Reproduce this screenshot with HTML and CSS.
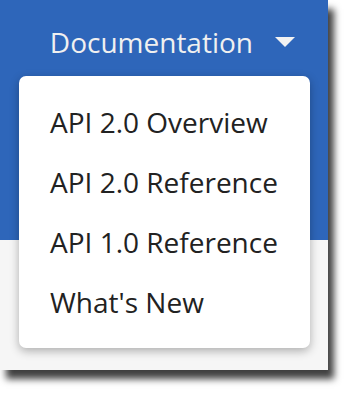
FILE: index.html
```html
<!DOCTYPE html>
<html>
<head>
<meta charset="utf-8">
<link rel="stylesheet" href="styles.css">
</head>
<body>
<div class="frame">
  <header class="header">
    <div class="nav">
      <span class="nav-label">Documentation</span>
      <svg class="caret" width="20" height="10" viewBox="0 0 20 10"><path d="M0 0 H20 L10 10 Z" fill="#f2f2f2"/></svg>
    </div>
  </header>
  <div class="below"></div>
  <ul class="menu">
    <li class="item">API 2.0 Overview</li>
    <li class="item">API 2.0 Reference</li>
    <li class="item">API 1.0 Reference</li>
    <li class="item">What's New</li>
  </ul>
</div>
</body>
</html>
```

FILE: styles.css
```css
html, body {
  margin: 0;
  padding: 0;
  background: #ffffff;
}
body {
  font-family: "Open Sans", "Noto Sans", sans-serif;
  height: 395px;
}
.frame {
  position: relative;
  width: 328px;
  height: 370px;
  display: flex;
  flex-direction: column;
  box-shadow: 6px 9px 7px rgba(0, 0, 0, 0.75);
}
.header {
  height: 240px;
  background: #2e66ba;
  display: flex;
  justify-content: flex-end;
  align-items: flex-start;
}
.nav {
  display: flex;
  align-items: center;
  gap: 22px;
  padding: 22px 33px 0 0;
}
.nav-label {
  font-size: 28px;
  line-height: 40px;
  color: #f0f0f0;
}
.caret {
  display: block;
}
.below {
  flex: 1;
  background: #f6f6f6;
}
.menu {
  position: absolute;
  left: 19px;
  top: 76px;
  width: 291px;
  margin: 0;
  padding: 16px 0;
  list-style: none;
  background: #ffffff;
  border-radius: 7px;
  box-shadow: 0 3px 10px rgba(0, 0, 0, 0.3);
  box-sizing: border-box;
}
.item {
  font-size: 28px;
  line-height: 60px;
  color: #222222;
  padding-left: 31px;
}
```
